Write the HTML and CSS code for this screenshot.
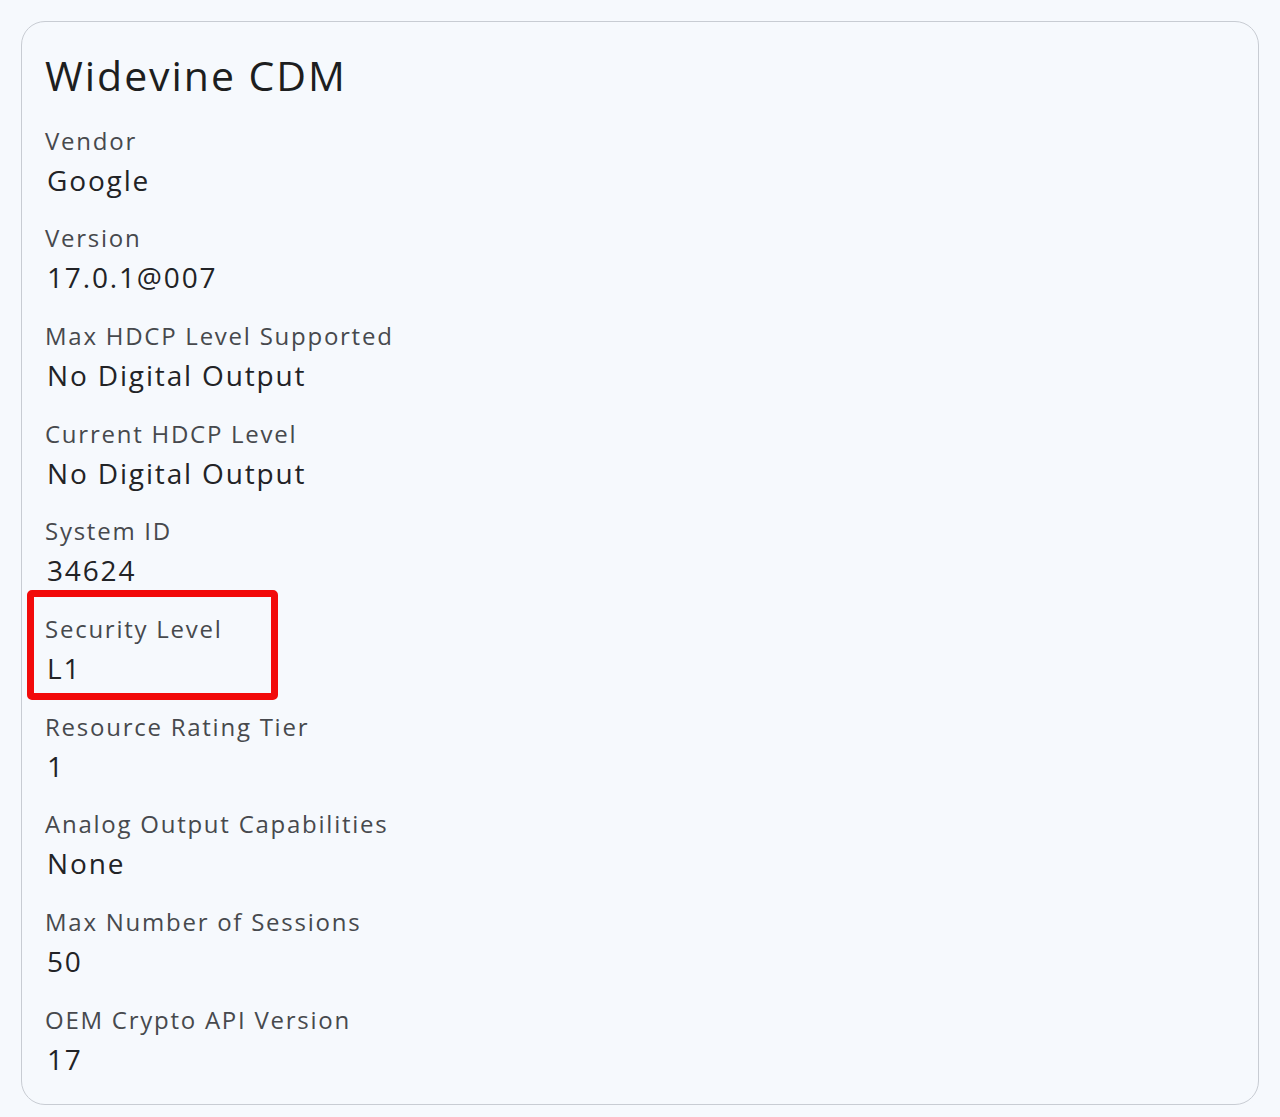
FILE: index.html
```html
<!DOCTYPE html>
<html lang="en">
<head>
<meta charset="utf-8">
<title>Widevine CDM</title>
<link rel="stylesheet" href="styles.css">
</head>
<body>
<div class="card">
  <h1 class="title">Widevine CDM</h1>
  <div class="item"><div class="label">Vendor</div><div class="value">Google</div></div>
  <div class="item"><div class="label">Version</div><div class="value">17.0.1@007</div></div>
  <div class="item"><div class="label">Max HDCP Level Supported</div><div class="value">No Digital Output</div></div>
  <div class="item"><div class="label">Current HDCP Level</div><div class="value">No Digital Output</div></div>
  <div class="item"><div class="label">System ID</div><div class="value">34624</div></div>
  <div class="item highlight"><div class="label">Security Level</div><div class="value">L1</div></div>
  <div class="item"><div class="label">Resource Rating Tier</div><div class="value">1</div></div>
  <div class="item"><div class="label">Analog Output Capabilities</div><div class="value">None</div></div>
  <div class="item"><div class="label">Max Number of Sessions</div><div class="value">50</div></div>
  <div class="item"><div class="label">OEM Crypto API Version</div><div class="value">17</div></div>
</div>
</body>
</html>
```

FILE: styles.css
```css
html, body {
  margin: 0;
  padding: 0;
  background: #f6f9fd;
}
body {
  padding: 21px 21px 0;
  font-family: "Open Sans", "Noto Sans", sans-serif;
}
.card {
  border: 1.5px solid #c8ccd3;
  border-radius: 24px;
  padding: 24.5px 23px 24px;
  background: #f6f9fd;
}
.title {
  margin: 0 0 20px;
  font-size: 41px;
  line-height: 56px;
  letter-spacing: 1.95px;
  font-weight: 400;
  color: #1d1e20;
}
.item {
  position: relative;
  margin-bottom: 19.7px;
}
.item:last-child {
  margin-bottom: 0;
}
.label {
  font-size: 24px;
  line-height: 36px;
  letter-spacing: 1.75px;
  color: #47494d;
}
.value {
  font-size: 28px;
  line-height: 42px;
  letter-spacing: 1.85px;
  color: #222326;
  padding-left: 2px;
}
.highlight::after {
  content: "";
  position: absolute;
  left: -18px;
  top: -21px;
  box-sizing: border-box;
  width: 251px;
  height: 110px;
  border: 7px solid #f20a0a;
  border-radius: 5px;
}
```
